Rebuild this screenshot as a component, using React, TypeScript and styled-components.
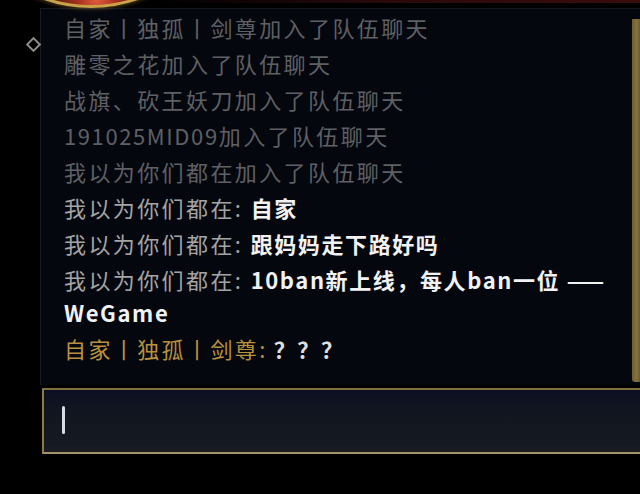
import React from "react";
import styled, { createGlobalStyle } from "styled-components";

const GlobalStyle = createGlobalStyle`
  html, body {
    margin: 0;
    padding: 0;
    background: #000;
  }
  body {
    font-family: "Noto Sans CJK SC", "Noto Sans", sans-serif;
  }
`;

const Screen = styled.div`
  position: relative;
  width: 640px;
  height: 494px;
  overflow: hidden;
  background: #000;
`;

// bottom rim of the player portrait that hangs over the panel
const Portrait = styled.div`
  position: absolute;
  left: -52px;
  top: -278px;
  width: 280px;
  height: 280px;
  border-radius: 50%;
  border: 3px solid #c9a24a;
  background: radial-gradient(circle at 52% 98%, #e35a40 0%, #a8301f 6%, #5a1a12 14%, #2a0e0c 30%);
  box-shadow: 0 0 5px rgba(200, 150, 70, 0.6);
  z-index: 2;
`;

const TopGlow = styled.div`
  position: absolute;
  left: 150px;
  right: 0;
  top: 0;
  height: 3px;
  background: linear-gradient(90deg, rgba(60, 10, 10, 0) 0%, #2a0a0c 50%, #3a0c0e 100%);
`;

const Diamond = styled.div`
  position: absolute;
  left: 28px;
  top: 39px;
  width: 7px;
  height: 7px;
  border: 2px solid #8c8c8c;
  transform: rotate(45deg);
  z-index: 2;
`;

const ChatPanel = styled.div`
  display: flex;
  margin: 8px 0 0 40px;
  height: 377px;
  background: #05070e;
  border-left: 1px solid #151a26;
  border-top: 1px solid #121722;
  box-sizing: border-box;
`;

const MessageList = styled.div`
  flex: 1;
  display: flex;
  flex-direction: column;
  gap: 3px;
  padding: 2px 4px 0 23px;
  overflow: hidden;
`;

const Message = styled.div`
  font-size: 22px;
  line-height: 33px;
  letter-spacing: 2.4px;
  color: #a4a4a4;
  word-break: normal;
`;

const SystemText = styled.span`
  color: #5e6064;
`;

const Latin = styled.span`
  letter-spacing: 1.6px;
`;

const BodyText = styled.span<{ $gold?: boolean }>`
  font-weight: 700;
  letter-spacing: 1.6px;
  color: ${(p) => (p.$gold ? "#dedede" : "#f2f2f2")};
  margin-left: ${(p) => (p.$gold ? "6px" : "0")};
`;

const GoldName = styled.span`
  color: #b8913c;
`;

const ScrollTrack = styled.div`
  width: 8px;
  padding-top: 10px;
  padding-bottom: 3px;
  display: flex;
`;

const ScrollThumb = styled.div`
  flex: 1;
  background: linear-gradient(90deg, #6e5d30 0%, #85733f 60%, #6a5a2e 100%);
  border-radius: 0 0 0 3px;
`;

const InputBox = styled.div`
  margin: 3px 0 0 42px;
  height: 66px;
  box-sizing: border-box;
  border-top: 2px solid #7f7140;
  border-left: 2px solid #8a7c48;
  border-bottom: 2px solid #a2946a;
  background: linear-gradient(180deg, #0b0f22 0%, #10151f 30%, #151a22 88%, #1d1b22 100%);
  display: flex;
  align-items: center;
  padding-left: 18px;
`;

const Caret = styled.div`
  width: 3px;
  height: 28px;
  border-radius: 2px;
  background: #d8dce2;
  margin-top: -2px;
`;

const chatLines = [
  { from: "我以为你们都在", text: "自家" },
  { from: "我以为你们都在", text: "跟妈妈走下路好吗" },
  { from: "我以为你们都在", text: "10ban新上线，每人ban一位 —— WeGame" },
];

export default function App() {
  return (
    <Screen>
      <GlobalStyle />
      <TopGlow />
      <Portrait />
      <Diamond />
      <ChatPanel>
        <MessageList>
          <Message>
            <SystemText>自家丨独孤丨剑尊加入了队伍聊天</SystemText>
          </Message>
          <Message>
            <SystemText>雕零之花加入了队伍聊天</SystemText>
          </Message>
          <Message>
            <SystemText>战旗、砍王妖刀加入了队伍聊天</SystemText>
          </Message>
          <Message>
            <SystemText>
              <Latin>191025MID09</Latin>加入了队伍聊天
            </SystemText>
          </Message>
          <Message>
            <SystemText>我以为你们都在加入了队伍聊天</SystemText>
          </Message>
          {chatLines.map((m) => (
            <Message key={m.text}>
              {m.from}: <BodyText>{m.text}</BodyText>
            </Message>
          ))}
          <Message>
            <GoldName>自家丨独孤丨剑尊:</GoldName>
            <BodyText $gold>？？？</BodyText>
          </Message>
        </MessageList>
        <ScrollTrack>
          <ScrollThumb />
        </ScrollTrack>
      </ChatPanel>
      <InputBox>
        <Caret />
      </InputBox>
    </Screen>
  );
}
